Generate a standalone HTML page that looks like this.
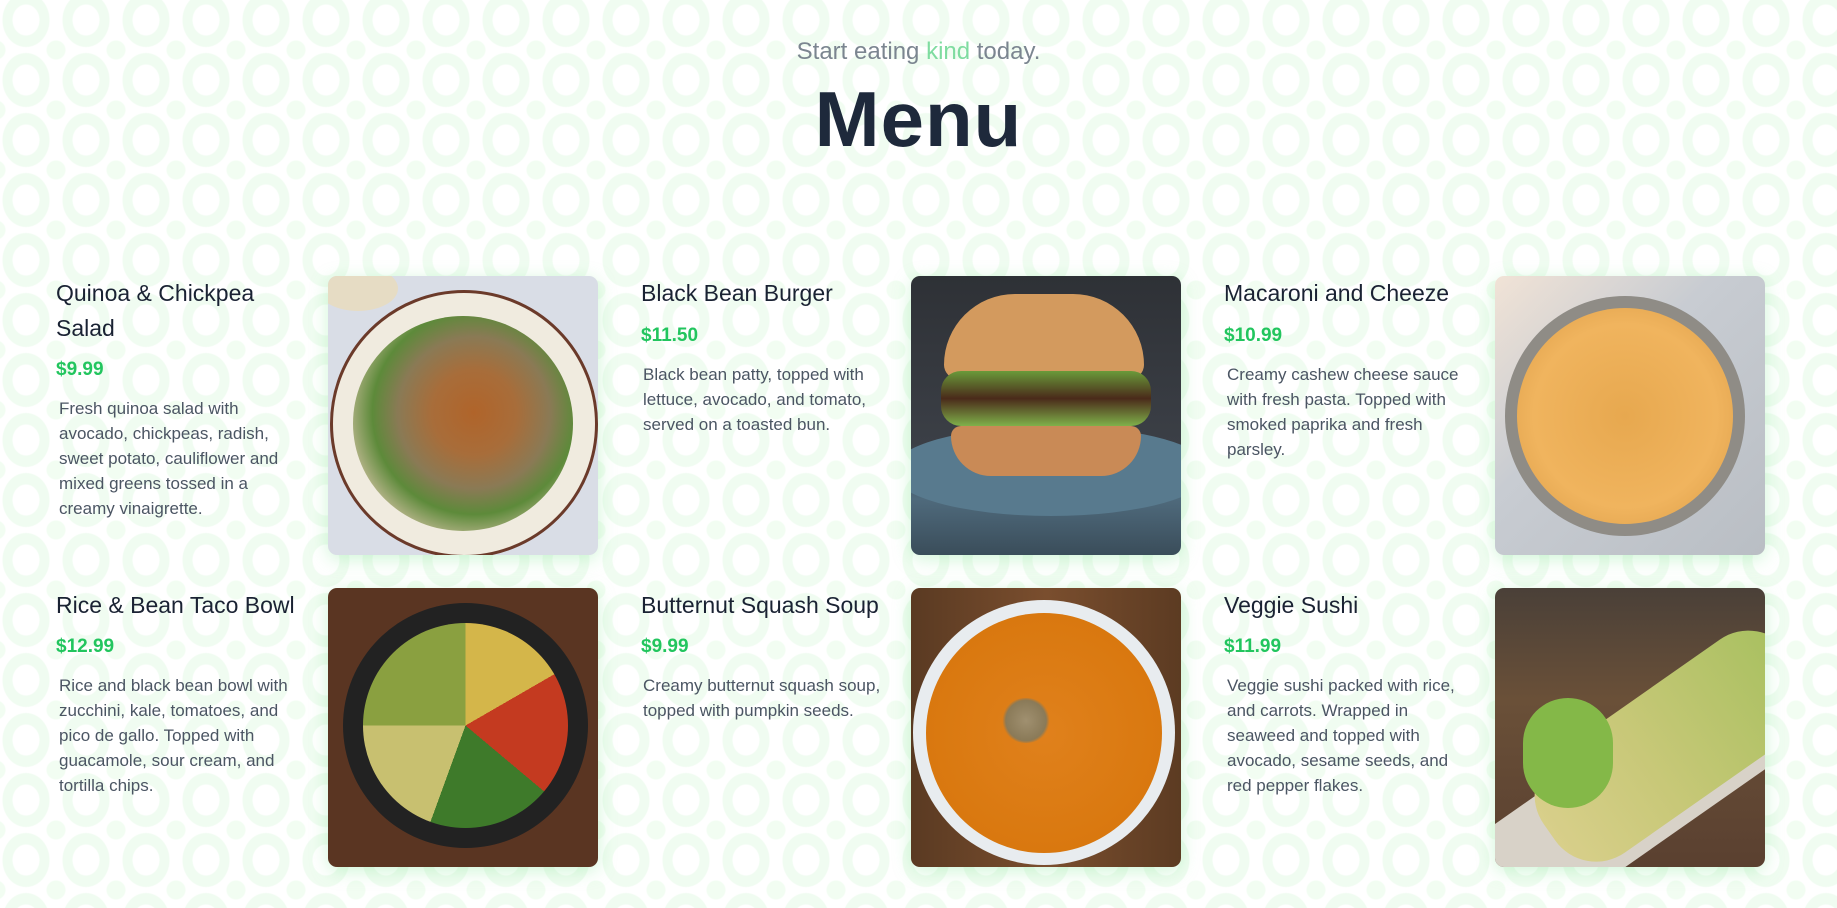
<!DOCTYPE html>
<html><head><meta charset="utf-8"><style>
*{margin:0;padding:0;box-sizing:border-box}
html,body{width:1837px;height:908px;overflow:hidden}
body{font-family:"Liberation Sans",sans-serif;background-color:#fff;
background-image:radial-gradient(ellipse 27px 31px at 30px 30px,transparent 0,transparent 13px,#f0fcf1 14px,#f0fcf1 23px,transparent 24px),
radial-gradient(circle at 0 0,#f2fdf2 0,#f2fdf2 9px,transparent 10px),
radial-gradient(circle at 60px 0,#f2fdf2 0,#f2fdf2 9px,transparent 10px),
radial-gradient(circle at 0 60px,#f2fdf2 0,#f2fdf2 9px,transparent 10px),
radial-gradient(circle at 60px 60px,#f2fdf2 0,#f2fdf2 9px,transparent 10px);
background-size:60px 60px;background-position:-4px -10px;position:relative}
.sub{position:absolute;top:38px;width:100%;text-align:center;font-size:24px;color:#7b8590}
.sub span{color:#7fdca0}
h1{position:absolute;top:74px;width:100%;text-align:center;font-size:78px;font-weight:bold;color:#1e293b;letter-spacing:1px}
.t{position:absolute;font-size:23px;color:#1a2233;line-height:35px;width:250px}
.p{position:absolute;font-size:19px;font-weight:bold;color:#22c55e}
.d{position:absolute;font-size:17px;color:#4b5563;line-height:25px;width:240px}
.img{position:absolute;width:270px;height:279px;border-radius:9px;overflow:hidden;box-shadow:0 4px 18px rgba(120,230,140,.35)}
</style></head><body>
<div class="sub">Start eating <span>kind</span> today.</div>
<h1>Menu</h1>

<div class="t" style="left:56px;top:276px">Quinoa &amp; Chickpea Salad</div>
<div class="p" style="left:56px;top:359px">$9.99</div>
<div class="d" style="left:59px;top:396px">Fresh quinoa salad with avocado, chickpeas, radish, sweet potato, cauliflower and mixed greens tossed in a creamy vinaigrette.</div>
<div class="img" style="left:328px;top:276px;background:#d9dde6">
<div style="position:absolute;left:-10px;top:-10px;width:80px;height:45px;border-radius:50%;background:#e6dcc4"></div>
<div style="position:absolute;left:2px;top:14px;width:268px;height:268px;border-radius:50%;background:#f0ebdf;border:3px solid #6b3a2a"></div>
<div style="position:absolute;left:25px;top:40px;width:220px;height:215px;border-radius:50%;background:radial-gradient(circle at 55% 45%,#b0642a 0,#a86d3a 25%,#8a7a55 45%,#5d8a3a 60%,#c8bd9a 78%,transparent 82%)"></div>
</div>

<div class="t" style="left:641px;top:276px">Black Bean Burger</div>
<div class="p" style="left:641px;top:325px">$11.50</div>
<div class="d" style="left:643px;top:362px">Black bean patty, topped with lettuce, avocado, and tomato, served on a toasted bun.</div>
<div class="img" style="left:911px;top:276px;background:linear-gradient(#2e3136,#3b3f46 60%,#4f6a7c 80%,#3a4d5a)">
<div style="position:absolute;left:-20px;top:150px;width:320px;height:90px;border-radius:50%;background:#587a8e"></div>
<div style="position:absolute;left:33px;top:18px;width:200px;height:85px;border-radius:100px 100px 20px 20px;background:#d39a5e"></div>
<div style="position:absolute;left:30px;top:95px;width:210px;height:55px;border-radius:20px;background:linear-gradient(#6a9a3a,#4a2a1a 50%,#7fb04a)"></div>
<div style="position:absolute;left:40px;top:150px;width:190px;height:50px;border-radius:10px 10px 40px 40px;background:#c98a56"></div>
</div>

<div class="t" style="left:1224px;top:276px">Macaroni and Cheeze</div>
<div class="p" style="left:1224px;top:325px">$10.99</div>
<div class="d" style="left:1227px;top:362px">Creamy cashew cheese sauce with fresh pasta. Topped with smoked paprika and fresh parsley.</div>
<div class="img" style="left:1495px;top:276px;background:linear-gradient(135deg,#f1e3d6,#c8ccd2 40%,#b9bec4)">
<div style="position:absolute;left:10px;top:20px;width:240px;height:240px;border-radius:50%;background:#8f8c86"></div>
<div style="position:absolute;left:22px;top:32px;width:216px;height:216px;border-radius:50%;background:radial-gradient(circle,#e7a84f,#f0b45e 60%,#d99a45)"></div>
</div>

<div class="t" style="left:56px;top:588px">Rice &amp; Bean Taco Bowl</div>
<div class="p" style="left:56px;top:636px">$12.99</div>
<div class="d" style="left:59px;top:673px">Rice and black bean bowl with zucchini, kale, tomatoes, and pico de gallo. Topped with guacamole, sour cream, and tortilla chips.</div>
<div class="img" style="left:328px;top:588px;background:#5a3522">
<div style="position:absolute;left:15px;top:15px;width:245px;height:245px;border-radius:50%;background:#222"></div>
<div style="position:absolute;left:35px;top:35px;width:205px;height:205px;border-radius:50%;background:conic-gradient(#d4b64a 0 60deg,#c43a20 60deg 130deg,#3e7a2a 130deg 200deg,#c8c070 200deg 270deg,#8aa040 270deg 360deg)"></div>
</div>

<div class="t" style="left:641px;top:588px">Butternut Squash Soup</div>
<div class="p" style="left:641px;top:636px">$9.99</div>
<div class="d" style="left:643px;top:673px">Creamy butternut squash soup, topped with pumpkin seeds.</div>
<div class="img" style="left:911px;top:588px;background:linear-gradient(90deg,#5a3a22,#7a4e2e,#5c3b22)">
<div style="position:absolute;left:2px;top:12px;width:262px;height:265px;border-radius:50%;background:#e8ecef"></div>
<div style="position:absolute;left:15px;top:25px;width:236px;height:240px;border-radius:50%;background:radial-gradient(circle,#e0811c,#d9780f 70%,#c86a10)"></div>
<div style="position:absolute;left:90px;top:110px;width:50px;height:45px;border-radius:50%;background:radial-gradient(circle,#a09070,#8a7a58 60%,transparent 70%)"></div>
</div>

<div class="t" style="left:1224px;top:588px">Veggie Sushi</div>
<div class="p" style="left:1224px;top:636px">$11.99</div>
<div class="d" style="left:1227px;top:673px">Veggie sushi packed with rice, and carrots. Wrapped in seaweed and topped with avocado, sesame seeds, and red pepper flakes.</div>
<div class="img" style="left:1495px;top:588px;background:linear-gradient(#4a4038,#6a5038 40%,#5a4030)">
<div style="position:absolute;left:-20px;top:250px;width:360px;height:110px;background:#d8d2c8;transform:rotate(-35deg);transform-origin:0 0"></div>
<div style="position:absolute;left:20px;top:195px;width:300px;height:120px;border-radius:50px;background:linear-gradient(90deg,#d8cf8a,#c8c878 40%,#a8c060);transform:rotate(-35deg);transform-origin:0 0"></div>
<div style="position:absolute;left:28px;top:110px;width:90px;height:110px;border-radius:45px;background:#84b848"></div>
</div>
</body></html>
